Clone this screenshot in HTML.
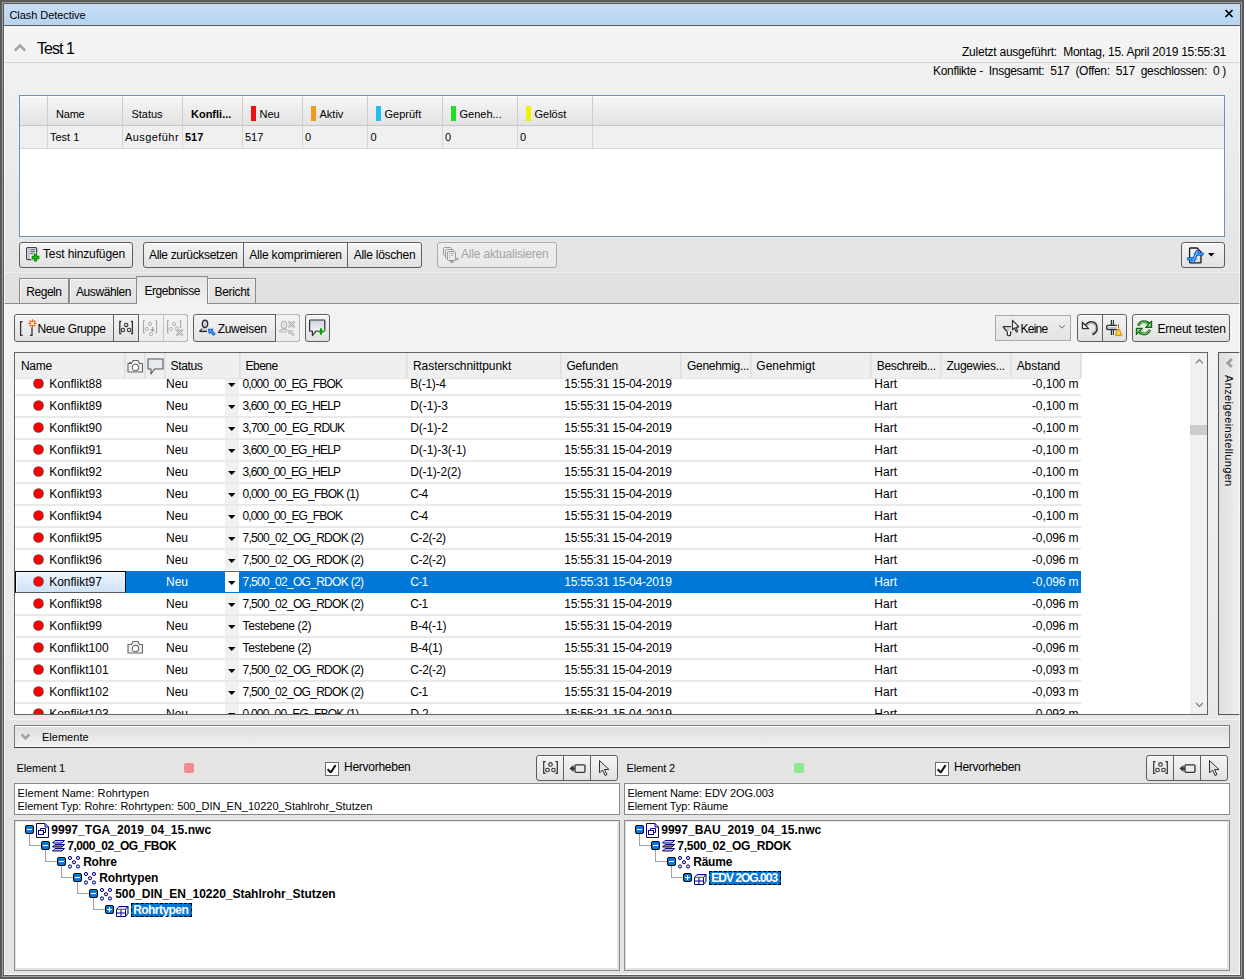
<!DOCTYPE html>
<html><head><meta charset="utf-8">
<style>
*{box-sizing:border-box;margin:0;padding:0}
html,body{width:1246px;height:980px;overflow:hidden;background:#fff;font-family:"Liberation Sans",sans-serif;font-size:12px;color:#000}
.a{position:absolute}
.t{position:absolute;white-space:nowrap;line-height:1}
svg{position:absolute;overflow:visible}
</style></head><body>
<div class="a" style="left:0px;top:0px;width:1244px;height:979px;background:#595959"></div>
<div class="a" style="left:2px;top:2px;width:1240px;height:975px;background:#9d9d9d"></div>
<div class="a" style="left:3px;top:3px;width:1238px;height:973px;background:#595959"></div>
<div class="a" style="left:4px;top:4px;width:1236px;height:21px;background:linear-gradient(#c8def4,#b6d3f0)"></div>
<div class="t" style="left:9.5px;top:10.19px;font-size:11px;letter-spacing:-0.070px">Clash Detective</div>
<svg style="left:1224px;top:9px;" width="10" height="9" viewBox="0 0 10 9"><path d="M1.5 1L8.5 8M8.5 1L1.5 8" stroke="#000" stroke-width="1.7"/></svg>
<div class="a" style="left:4px;top:26px;width:1236px;height:36px;background:#f3f3f3"></div>
<div class="a" style="left:4px;top:62px;width:1236px;height:1px;background:#d4d4d4"></div>
<svg style="left:13px;top:43px;" width="14" height="10" viewBox="0 0 14 10"><path d="M1.8 7.6L7 2.6L12.2 7.6" fill="none" stroke="#a3a3a3" stroke-width="2.7"/></svg>
<div class="t" style="left:37px;top:40.66px;font-size:16px;letter-spacing:-0.948px">Test 1</div>
<div class="t" style="left:962px;top:46.34px;font-size:12px;letter-spacing:-0.234px">Zuletzt ausgeführt:&nbsp; Montag, 15. April 2019 15:55:31</div>
<div class="a" style="left:4px;top:63px;width:1236px;height:209px;background:linear-gradient(#f1f1f1,#e4e4e4)"></div>
<div class="a" style="left:4px;top:272px;width:1236px;height:1px;background:#efefef"></div>
<div class="t" style="left:933px;top:64.84px;font-size:12px;letter-spacing:-0.321px">Konflikte -&nbsp; Insgesamt:&nbsp; 517&nbsp; (Offen:&nbsp; 517&nbsp; geschlossen:&nbsp; 0 )</div>
<div class="a" style="left:19px;top:95px;width:1206px;height:142px;background:#fff;border:1px solid #7092b8"></div>
<div class="a" style="left:20px;top:96px;width:1204px;height:29px;background:linear-gradient(#f6f6f6,#e3e3e3);border-top:1px solid #fff"></div>
<div class="a" style="left:20px;top:125px;width:1204px;height:1px;background:#c6c6c6"></div>
<div class="a" style="left:20px;top:126px;width:1204px;height:22px;background:#f0f0f0"></div>
<div class="a" style="left:20px;top:148px;width:1204px;height:1px;background:#d6d6d6"></div>
<div class="a" style="left:47px;top:96px;width:1px;height:29px;background:#cdcdcd"></div>
<div class="a" style="left:47px;top:126px;width:1px;height:22px;background:#d6d6d6"></div>
<div class="a" style="left:122px;top:96px;width:1px;height:29px;background:#cdcdcd"></div>
<div class="a" style="left:122px;top:126px;width:1px;height:22px;background:#d6d6d6"></div>
<div class="a" style="left:182px;top:96px;width:1px;height:29px;background:#cdcdcd"></div>
<div class="a" style="left:182px;top:126px;width:1px;height:22px;background:#d6d6d6"></div>
<div class="a" style="left:242px;top:96px;width:1px;height:29px;background:#cdcdcd"></div>
<div class="a" style="left:242px;top:126px;width:1px;height:22px;background:#d6d6d6"></div>
<div class="a" style="left:302px;top:96px;width:1px;height:29px;background:#cdcdcd"></div>
<div class="a" style="left:302px;top:126px;width:1px;height:22px;background:#d6d6d6"></div>
<div class="a" style="left:367px;top:96px;width:1px;height:29px;background:#cdcdcd"></div>
<div class="a" style="left:367px;top:126px;width:1px;height:22px;background:#d6d6d6"></div>
<div class="a" style="left:442px;top:96px;width:1px;height:29px;background:#cdcdcd"></div>
<div class="a" style="left:442px;top:126px;width:1px;height:22px;background:#d6d6d6"></div>
<div class="a" style="left:517px;top:96px;width:1px;height:29px;background:#cdcdcd"></div>
<div class="a" style="left:517px;top:126px;width:1px;height:22px;background:#d6d6d6"></div>
<div class="a" style="left:592px;top:96px;width:1px;height:29px;background:#cdcdcd"></div>
<div class="a" style="left:592px;top:126px;width:1px;height:22px;background:#d6d6d6"></div>
<div class="t" style="left:56px;top:109.19px;font-size:11px;letter-spacing:-0.211px">Name</div>
<div class="t" style="left:131.5px;top:109.19px;font-size:11px;letter-spacing:-0.031px">Status</div>
<div class="t" style="left:191px;top:109.19px;font-size:11px;font-weight:bold;letter-spacing:-0.003px">Konfli...</div>
<div class="a" style="left:251px;top:106px;width:5px;height:15px;background:#ee1111"></div>
<div class="t" style="left:259.5px;top:109.19px;font-size:11px;">Neu</div>
<div class="a" style="left:311px;top:106px;width:5px;height:15px;background:#f39a1e"></div>
<div class="t" style="left:319.5px;top:109.19px;font-size:11px;">Aktiv</div>
<div class="a" style="left:376px;top:106px;width:5px;height:15px;background:#1ec0ee"></div>
<div class="t" style="left:384.5px;top:109.19px;font-size:11px;">Geprüft</div>
<div class="a" style="left:451px;top:106px;width:5px;height:15px;background:#22dd22"></div>
<div class="t" style="left:459.5px;top:109.19px;font-size:11px;">Geneh...</div>
<div class="a" style="left:526px;top:106px;width:5px;height:15px;background:#f0f000"></div>
<div class="t" style="left:534.5px;top:109.19px;font-size:11px;">Gelöst</div>
<div class="t" style="left:50px;top:132.19px;font-size:11px;">Test 1</div>
<div class="t" style="left:125px;top:132.19px;font-size:11px;letter-spacing:0.427px">Ausgeführ</div>
<div class="t" style="left:185px;top:132.19px;font-size:11px;font-weight:bold;">517</div>
<div class="t" style="left:245px;top:132.19px;font-size:11px;">517</div>
<div class="t" style="left:305px;top:132.19px;font-size:11px;">0</div>
<div class="t" style="left:370.5px;top:132.19px;font-size:11px;">0</div>
<div class="t" style="left:445px;top:132.19px;font-size:11px;">0</div>
<div class="t" style="left:520px;top:132.19px;font-size:11px;">0</div>
<div class="a" style="left:19px;top:242px;width:114px;height:26px;background:linear-gradient(#f4f4f4 0%,#ececec 45%,#e1e1e1 100%);border:1px solid #5e5e5e;border-radius:3px;box-shadow:inset 0 1px 0 #fff"></div>
<svg style="left:26px;top:247px;" width="15" height="16" viewBox="0 0 15 16"><rect x="0.6" y="0.6" width="10" height="12" rx="1" fill="#fff" stroke="#3c4450" stroke-width="1.2"/><g fill="#555d68"><rect x="2.4" y="2.3" width="1.2" height="1.2"/><rect x="2.4" y="4.3" width="1.2" height="1.2"/><rect x="2.4" y="6.3" width="1.2" height="1.2"/><rect x="2.4" y="8.3" width="1.2" height="1.2"/><rect x="2.4" y="10.3" width="1.2" height="1.2"/><rect x="4.3" y="2.2" width="5" height="1.2"/><rect x="4.3" y="4.2" width="5" height="1.2"/><rect x="4.3" y="6.2" width="3" height="1.2"/></g><path d="M9.5 6V15M5 10.5H14" stroke="#fff" stroke-width="4.6"/><path d="M9.5 6.6V14.4M5.6 10.5H13.4" stroke="#0a7a0a" stroke-width="3.4"/><path d="M9.5 7.4V13.6M6.4 10.5H12.6" stroke="#12c412" stroke-width="1.6"/></svg>
<div class="t" style="left:43px;top:247.84px;font-size:12px;letter-spacing:-0.138px">Test hinzufügen</div>
<div class="a" style="left:143px;top:242px;width:279px;height:26px;background:linear-gradient(#f4f4f4 0%,#ececec 45%,#e1e1e1 100%);border:1px solid #5e5e5e;border-radius:3px;box-shadow:inset 0 1px 0 #fff"></div>
<div class="a" style="left:243px;top:243px;width:1px;height:24px;background:#5e5e5e"></div>
<div class="a" style="left:347px;top:243px;width:1px;height:24px;background:#5e5e5e"></div>
<div class="t" style="left:149px;top:248.84px;font-size:12px;letter-spacing:-0.338px">Alle zurücksetzen</div>
<div class="t" style="left:249.3px;top:248.84px;font-size:12px;letter-spacing:-0.208px">Alle komprimieren</div>
<div class="t" style="left:353.7px;top:248.84px;font-size:12px;letter-spacing:-0.252px">Alle löschen</div>
<div class="a" style="left:437px;top:242px;width:120px;height:26px;background:linear-gradient(#eeeeee,#e9e9e9);border:1px solid #ababab;border-radius:3px"></div>
<svg style="left:443px;top:247px;" width="16" height="17" viewBox="0 0 16 17"><g fill="none" stroke="#9c9c9c" stroke-width="1"><rect x="0.5" y="0.5" width="8" height="8" rx="1.2"/><rect x="2.5" y="2.5" width="8" height="9" rx="1.2" fill="#ececec"/><rect x="4.5" y="4.5" width="8" height="9" rx="1.2" fill="#ececec"/></g><g fill="#a8a8a8"><rect x="6" y="6" width="1" height="1"/><rect x="6" y="8" width="1" height="1"/><rect x="6" y="10" width="1" height="1"/><rect x="8" y="6" width="3" height="1"/><rect x="8" y="8" width="2" height="1"/></g><path d="M8.2 15.2L14.5 11.8M12.5 11.2H14.8V13.5M7.8 12.8V15.4H10.2" fill="none" stroke="#a0a0a0" stroke-width="1.1"/></svg>
<div class="t" style="left:461px;top:248.34px;font-size:12px;color:#a3a3a3;letter-spacing:-0.173px">Alle aktualisieren</div>
<div class="a" style="left:1181px;top:242px;width:44px;height:26px;background:linear-gradient(#f4f4f4 0%,#ececec 45%,#e1e1e1 100%);border:1px solid #5e5e5e;border-radius:3px;box-shadow:inset 0 1px 0 #fff"></div>
<svg style="left:1187px;top:247px;" width="17" height="17" viewBox="0 0 17 17"><defs><linearGradient id="dg" x1="0" y1="0" x2="1" y2="1"><stop offset="0" stop-color="#fff"/><stop offset="1" stop-color="#cfd5de"/></linearGradient></defs><path d="M2.6 1.6Q2.6 1 3.2 1H10L14 5V15.2Q14 15.8 13.4 15.8H3.2Q2.6 15.8 2.6 15.2Z" fill="url(#dg)" stroke="#1a1a1a" stroke-width="1.3"/><path d="M8.5 7H15.2M1.5 11.8H8M10.2 4.5L5.8 15" stroke="#0f5fc8" stroke-width="3.4" stroke-linecap="round"/><path d="M8.5 7H15.2M1.5 11.8H8M10.2 4.5L5.8 15" stroke="#3c9cff" stroke-width="1.6" stroke-linecap="round"/><path d="M10.2 4.5L5.8 15" stroke="#fff" stroke-width="0.6" stroke-dasharray="1 1"/></svg>
<svg style="left:1208px;top:253px;" width="7" height="4" viewBox="0 0 7 4"><path d="M0 0H6.5L3.25 3.5Z" fill="#000"/></svg>
<div class="a" style="left:4px;top:273px;width:1236px;height:30px;background:#e1e1e1"></div>
<div class="a" style="left:4px;top:303px;width:1236px;height:1px;background:#8c8c8c"></div>
<div class="a" style="left:4px;top:304px;width:1236px;height:416px;background:linear-gradient(#f3f3f3,#e8e8e8)"></div>
<div class="a" style="left:19px;top:278px;width:50px;height:25px;background:linear-gradient(#e9e9e9,#e1e1e1);border:1px solid #8a8a8a;border-bottom:none;box-shadow:inset 1px 1px 0 #f6f6f6"></div>
<div class="a" style="left:69px;top:278px;width:68px;height:25px;background:linear-gradient(#e9e9e9,#e1e1e1);border:1px solid #8a8a8a;border-bottom:none;box-shadow:inset 1px 1px 0 #f6f6f6"></div>
<div class="a" style="left:207px;top:278px;width:49px;height:25px;background:linear-gradient(#e9e9e9,#e1e1e1);border:1px solid #8a8a8a;border-bottom:none;box-shadow:inset 1px 1px 0 #f6f6f6"></div>
<div class="a" style="left:136px;top:276px;width:72px;height:28px;background:linear-gradient(#e4e4e4,#f2f2f2);border:1px solid #8a8a8a;border-bottom:none"></div>
<div class="t" style="left:26.3px;top:285.84px;font-size:12px;letter-spacing:-0.472px">Regeln</div>
<div class="t" style="left:76px;top:285.84px;font-size:12px;letter-spacing:-0.413px">Auswählen</div>
<div class="t" style="left:144.5px;top:285.34px;font-size:12px;letter-spacing:-0.465px">Ergebnisse</div>
<div class="t" style="left:214.5px;top:285.84px;font-size:12px;letter-spacing:-0.337px">Bericht</div>
<div class="a" style="left:14px;top:314px;width:174px;height:28px;background:linear-gradient(#f4f4f4 0%,#ececec 45%,#e1e1e1 100%);border:1px solid #5e5e5e;border-radius:3px;box-shadow:inset 0 1px 0 #fff"></div>
<div class="a" style="left:113px;top:315px;width:1px;height:26px;background:#5e5e5e"></div>
<div class="a" style="left:139px;top:314px;width:49px;height:28px;background:linear-gradient(#f3f3f3,#ececec);border:1px solid #b9b9b9;border-left:none;border-radius:0 3px 3px 0"></div>
<div class="a" style="left:163px;top:315px;width:1px;height:26px;background:#c5c5c5"></div>
<div class="a" style="left:138px;top:314px;width:1px;height:28px;background:#5e5e5e"></div>
<svg style="left:16px;top:316px;" width="24" height="24" viewBox="0 0 24 24"><path d="M6.6 5.6H4.6V19.4H6.6M16 11.2V19.4H14" fill="none" stroke="#2f3338" stroke-width="1.3"/><g stroke="#e8400e" stroke-width="1.3" stroke-linecap="round"><path d="M16.4 3.9V10.9M12.9 7.4H19.9M13.9 4.9L18.9 9.9M18.9 4.9L13.9 9.9"/></g><circle cx="16.4" cy="7.4" r="1.9" fill="#ffe45c"/><circle cx="16.4" cy="7.4" r="0.9" fill="#fffbe0"/></svg>
<div class="t" style="left:37.5px;top:323.34px;font-size:12px;letter-spacing:-0.368px">Neue Gruppe</div>
<svg style="left:114px;top:316px;" width="24" height="24" viewBox="0 0 24 24"><path d="M7.3 5.5H5.8V17.5H7.3M16.9 5.5H18.4V17.5H16.9" fill="none" stroke="#2f3338" stroke-width="1.3"/><circle cx="12.2" cy="8.9" r="1.7" fill="none" stroke="#2f3338" stroke-width="1.1"/><circle cx="8.9" cy="14" r="1.7" fill="none" stroke="#2f3338" stroke-width="1.1"/><circle cx="15.1" cy="14" r="1.7" fill="none" stroke="#2f3338" stroke-width="1.1"/></svg>
<svg style="left:138px;top:316px;" width="24" height="24" viewBox="0 0 24 24"><path d="M6.8 4.7H5.5V16.8H6.8M17.3 4.7H18.6V16.8H17.3" fill="none" stroke="#a9a9a9" stroke-width="1.1"/><circle cx="12" cy="7.9" r="1.6" fill="none" stroke="#b0b0b0"/><circle cx="8.8" cy="13" r="1.6" fill="none" stroke="#b0b0b0"/><circle cx="13" cy="18" r="1.6" fill="none" stroke="#b0b0b0"/><path d="M14.6 11V15M12.8 13.4L14.6 15.2L16.4 13.4" fill="none" stroke="#a0a0a0" stroke-width="1.1"/></svg>
<svg style="left:163px;top:316px;" width="24" height="24" viewBox="0 0 24 24"><path d="M5.9 4.7H4.6V16.8H5.9M16.3 4.7H17.6V12" fill="none" stroke="#a9a9a9" stroke-width="1.1"/><circle cx="11" cy="8" r="1.6" fill="none" stroke="#b8b8b8"/><circle cx="7.8" cy="13" r="1.6" fill="none" stroke="#b8b8b8"/><circle cx="14" cy="12.5" r="1.6" fill="none" stroke="#b8b8b8"/><path d="M13.6 13.5L19.6 19.5M19.6 13.5L13.6 19.5" stroke="#a8a8a8" stroke-width="2.4"/><path d="M13.6 13.5L19.6 19.5M19.6 13.5L13.6 19.5" stroke="#eeeeee" stroke-width="0.8"/></svg>
<div class="a" style="left:193px;top:314px;width:107px;height:28px;background:linear-gradient(#f4f4f4 0%,#ececec 45%,#e1e1e1 100%);border:1px solid #5e5e5e;border-radius:3px;box-shadow:inset 0 1px 0 #fff"></div>
<div class="a" style="left:276px;top:314px;width:24px;height:28px;background:linear-gradient(#f3f3f3,#ececec);border:1px solid #b9b9b9;border-left:none;border-radius:0 3px 3px 0"></div>
<svg style="left:194px;top:316px;" width="24" height="24" viewBox="0 0 24 24"><path d="M5.6 15.3L8.2 12.6Q8.8 12.2 9.6 12.2H13.2V15.3Z" fill="#d2d6dd" stroke="none"/><path d="M5.6 15.2L8.2 12.6" stroke="#2a2d33" stroke-width="1.1"/><path d="M5.4 15.4H13" stroke="#1f2227" stroke-width="1.3"/><ellipse cx="11" cy="7.8" rx="2.7" ry="3.6" fill="#cfd3da" stroke="#2a2d33" stroke-width="1.4"/><path d="M9.6 11.6H12.4" stroke="#2a2d33" stroke-width="1.2"/><path d="M14.6 13.4H18.9L17.8 14.6L21 17.8L19.6 19.2L16.4 16L15.2 17.2Z" fill="#7ab8ff" stroke="#0a6ad6" stroke-width="1.2" stroke-linejoin="round"/></svg>
<div class="t" style="left:217.7px;top:322.54px;font-size:12px;letter-spacing:-0.295px">Zuweisen</div>
<div class="a" style="left:275px;top:314px;width:1px;height:28px;background:#5e5e5e"></div>
<svg style="left:276px;top:314px;" width="24" height="28" viewBox="0 0 24 28"><path d="M3.6 18H10.8V15.4H6.4Q4.2 15.4 3.6 17Z" fill="#e6e6e6" stroke="#b4b4b4" stroke-width="1"/><ellipse cx="8" cy="11" rx="2.7" ry="3.7" fill="#e2e2e2" stroke="#b4b4b4" stroke-width="1.1"/><path d="M12.6 7.4L18.6 13.4M18.6 7.4L12.6 13.4" stroke="#b0b0b0" stroke-width="2.4"/><path d="M12.6 7.4L18.6 13.4M18.6 7.4L12.6 13.4" stroke="#f0f0f0" stroke-width="0.7"/><path d="M12.6 16.8H16.4L15.4 17.8L18.2 20.6L17 21.8L14.2 19L13.2 20Z" fill="#e4e4e4" stroke="#b0b0b0" stroke-width="1"/></svg>
<div class="a" style="left:305px;top:314px;width:25px;height:28px;background:linear-gradient(#f4f4f4 0%,#ececec 45%,#e1e1e1 100%);border:1px solid #5e5e5e;border-radius:3px;box-shadow:inset 0 1px 0 #fff"></div>
<svg style="left:305px;top:314px;" width="25" height="28" viewBox="0 0 25 28"><defs><linearGradient id="bg1" x1="0" y1="0" x2="0" y2="1"><stop offset="0" stop-color="#cdd3dc"/><stop offset="1" stop-color="#ffffff"/></linearGradient></defs><path d="M4.6 6.8Q4.6 6 5.4 6H19Q19.8 6 19.8 6.8V16.4Q19.8 17.2 19 17.2H11L7.4 21.6V17.2H5.4Q4.6 17.2 4.6 16.4Z" fill="url(#bg1)" stroke="#2f3338" stroke-width="1.2" stroke-linejoin="round"/><path d="M16 14V21M12.6 17.5H19.4" stroke="#fff" stroke-width="3.6"/><path d="M16 14.2V20.8M12.8 17.5H19.2" stroke="#08a008" stroke-width="2.2"/></svg>
<div class="a" style="left:995px;top:315px;width:76px;height:26px;background:linear-gradient(#eeeeee,#e3e3e3);border:1px solid #a9a9a9"></div>
<svg style="left:1000px;top:316px;" width="24" height="24" viewBox="0 0 24 24"><path d="M3.8 12.2H10.8L8 15.4H7Z" fill="#c3c9d2"/><path d="M11 10.6H3.6Q3 10.6 3.4 11.4L6.8 15.2" fill="none" stroke="#2e3136" stroke-width="1.3" stroke-linejoin="round"/><path d="M7.4 15.6V18.6Q7.4 19.6 8.4 19.6H9.6Q10.6 19.6 10.6 18.6V15.6" fill="#fff" stroke="#2e3136" stroke-width="1.3"/><path d="M11.8 15.4L12 15.2" stroke="#2e3136" stroke-width="1.3"/><path d="M12.5 4.3V13.7L14.6 11.9L16.1 15.4Q16.5 16.2 17.2 15.8Q17.8 15.4 17.4 14.6L16 11.3L18.8 10.8Z" fill="#fff" stroke="#2e3136" stroke-width="1.2" stroke-linejoin="round"/></svg>
<div class="t" style="left:1020.5px;top:323.34px;font-size:12px;letter-spacing:-0.741px">Keine</div>
<svg style="left:1059px;top:325px;" width="6" height="4" viewBox="0 0 6 4"><path d="M0.3 0.3L3 3.2L5.7 0.3" fill="none" stroke="#666" stroke-width="1"/></svg>
<div class="a" style="left:1077px;top:314px;width:50px;height:28px;background:linear-gradient(#f4f4f4 0%,#ececec 45%,#e1e1e1 100%);border:1px solid #5e5e5e;border-radius:3px;box-shadow:inset 0 1px 0 #fff"></div>
<div class="a" style="left:1102px;top:315px;width:1px;height:26px;background:#5e5e5e"></div>
<svg style="left:1078px;top:316px;" width="24" height="24" viewBox="0 0 24 24"><path d="M7.2 10.6Q9.6 6.2 13.2 6.2Q18.6 6.2 18.6 12.4Q18.6 15.6 15.4 17.8" fill="none" stroke="#2e3238" stroke-width="2.6" stroke-linecap="round"/><path d="M7.4 10.6Q9.6 6.9 13.2 6.9Q17.9 6.9 17.9 12.4Q17.9 15.2 15.4 17.2" fill="none" stroke="#f4f4f4" stroke-width="0.9" stroke-linecap="round"/><path d="M4.4 6.3V12.6H10.6Z" fill="#f4f4f4" stroke="#2e3238" stroke-width="1.3" stroke-linejoin="round"/></svg>
<svg style="left:1103px;top:316px;" width="24" height="24" viewBox="0 0 24 24"><path d="M8.4 4V9M10.4 4V9M8.4 13.8V19M10.4 13.8V19" stroke="#2e3238" stroke-width="1.2"/><path d="M13.8 9.3H5Q3.6 9.3 3.6 11.4Q3.6 13.5 5 13.5H13.8" fill="#f2f2f2" stroke="#2e3238" stroke-width="1.3"/><path d="M5 11.4H13.6" stroke="#2e3238" stroke-width="0.6" opacity="0.5"/><path d="M15.5 8V12.5" stroke="#c77800" stroke-width="1"/><path d="M14.3 13.5H16.7L17.2 15.5L18.6 19.6H12.4L13.8 15.5Z" fill="#f6cf1a" stroke="#d08200" stroke-width="0.9" stroke-linejoin="round"/><path d="M14.6 16.5H16.4" stroke="#fff6b0" stroke-width="1"/></svg>
<div class="a" style="left:1132px;top:314px;width:98px;height:28px;background:linear-gradient(#f4f4f4 0%,#ececec 45%,#e1e1e1 100%);border:1px solid #5e5e5e;border-radius:3px;box-shadow:inset 0 1px 0 #fff"></div>
<svg style="left:1132px;top:316px;" width="24" height="24" viewBox="0 0 24 24"><g stroke="#0b6e0b" stroke-linejoin="round"><path d="M6.2 9.8Q8 5.6 12 5.6Q15.2 5.6 17 8.3" fill="none" stroke-width="2.8"/><path d="M19.6 5.2V11.4H13.6Z" fill="#8ec47e" stroke-width="1.2"/><path d="M17.8 13.8Q16 18 12 18Q8.8 18 7 15.3" fill="none" stroke-width="2.8"/><path d="M4.4 18.4V12.4H10.4Z" fill="#8ec47e" stroke-width="1.2"/></g><g stroke="#9ccf8c" fill="none" stroke-width="1"><path d="M6.4 9.6Q8.2 5.8 12 5.8Q15 5.8 16.6 8.4"/><path d="M17.6 14Q15.8 17.8 12 17.8Q9 17.8 7.4 15.2"/></g></svg>
<div class="t" style="left:1157.6px;top:322.54px;font-size:12px;letter-spacing:-0.261px">Erneut testen</div>
<div class="a" style="left:14px;top:352px;width:1194px;height:363px;background:#fff;border:1px solid #646464"></div>
<div class="a" style="left:15px;top:353px;width:1066px;height:25px;background:#efefef"></div>
<div class="a" style="left:15px;top:378px;width:1066px;height:1px;background:#e3e3e3"></div>
<div class="a" style="left:124px;top:353px;width:2px;height:25px;background:linear-gradient(90deg,#dcdcdc,#e8e8e8)"></div>
<div class="a" style="left:144px;top:353px;width:2px;height:25px;background:linear-gradient(90deg,#dcdcdc,#e8e8e8)"></div>
<div class="a" style="left:164px;top:353px;width:2px;height:25px;background:linear-gradient(90deg,#dcdcdc,#e8e8e8)"></div>
<div class="a" style="left:239px;top:353px;width:2px;height:25px;background:linear-gradient(90deg,#dcdcdc,#e8e8e8)"></div>
<div class="a" style="left:406px;top:353px;width:2px;height:25px;background:linear-gradient(90deg,#dcdcdc,#e8e8e8)"></div>
<div class="a" style="left:560px;top:353px;width:2px;height:25px;background:linear-gradient(90deg,#dcdcdc,#e8e8e8)"></div>
<div class="a" style="left:680px;top:353px;width:2px;height:25px;background:linear-gradient(90deg,#dcdcdc,#e8e8e8)"></div>
<div class="a" style="left:750px;top:353px;width:2px;height:25px;background:linear-gradient(90deg,#dcdcdc,#e8e8e8)"></div>
<div class="a" style="left:870px;top:353px;width:2px;height:25px;background:linear-gradient(90deg,#dcdcdc,#e8e8e8)"></div>
<div class="a" style="left:940px;top:353px;width:2px;height:25px;background:linear-gradient(90deg,#dcdcdc,#e8e8e8)"></div>
<div class="a" style="left:1010px;top:353px;width:2px;height:25px;background:linear-gradient(90deg,#dcdcdc,#e8e8e8)"></div>
<div class="a" style="left:1080px;top:353px;width:2px;height:25px;background:linear-gradient(90deg,#dcdcdc,#e8e8e8)"></div>
<div class="t" style="left:20.9px;top:359.54px;font-size:12px;letter-spacing:-0.254px">Name</div>
<svg style="left:127px;top:359px;" width="17" height="14" viewBox="0 0 17 14"><path d="M1 4.5H4.5L6 1.5H11L12.5 4.5H15.5V13H1Z" fill="#eceef0" stroke="#666" stroke-width="1.1" stroke-linejoin="round"/><circle cx="8.5" cy="8.5" r="3.2" fill="#fff" stroke="#666" stroke-width="1.1"/><path d="M2.5 4.5V3.5H4" stroke="#666"/></svg>
<svg style="left:147px;top:358px;" width="17" height="17" viewBox="0 0 17 17"><path d="M1 1H16V11H7.5L4 16V11H1Z" fill="#e6e9ee" stroke="#555" stroke-width="1.1" stroke-linejoin="round"/></svg>
<div class="t" style="left:170.6px;top:359.54px;font-size:12px;letter-spacing:-0.372px">Status</div>
<div class="t" style="left:245.6px;top:359.54px;font-size:12px;letter-spacing:-0.541px">Ebene</div>
<div class="t" style="left:413px;top:359.54px;font-size:12px;letter-spacing:-0.061px">Rasterschnittpunkt</div>
<div class="t" style="left:566.4px;top:359.54px;font-size:12px;letter-spacing:-0.140px">Gefunden</div>
<div class="t" style="left:687px;top:359.54px;font-size:12px;letter-spacing:-0.307px">Genehmig...</div>
<div class="t" style="left:756.3px;top:359.54px;font-size:12px;letter-spacing:-0.000px">Genehmigt</div>
<div class="t" style="left:876.8px;top:359.54px;font-size:12px;letter-spacing:-0.365px">Beschreib...</div>
<div class="t" style="left:946.5px;top:359.54px;font-size:12px;letter-spacing:-0.269px">Zugewies...</div>
<div class="t" style="left:1016.7px;top:359.54px;font-size:12px;letter-spacing:-0.078px">Abstand</div>
<div class="a" style="left:1190px;top:353px;width:17px;height:361px;background:#f0f0f0"></div>
<svg style="left:1195px;top:359px;" width="9" height="6" viewBox="0 0 9 6"><path d="M1 4.3L4.4 0.8L7.8 4.3" fill="none" stroke="#8c8c8c" stroke-width="1.5"/></svg>
<div class="a" style="left:1190px;top:425px;width:17px;height:10px;background:#cdcdcd"></div>
<svg style="left:1195px;top:702px;" width="9" height="6" viewBox="0 0 9 6"><path d="M1 1L4.4 4.5L7.8 1" fill="none" stroke="#8c8c8c" stroke-width="1.5"/></svg>
<div class="a" style="left:15px;top:379px;width:1175px;height:335px;overflow:hidden">
<div class="a" style="left:0px;top:15px;width:1066px;height:2px;background:#e9e9e9"></div>
<div class="a" style="left:18.9px;top:0.1px;width:9.2px;height:9.2px;border-radius:50%;background:#f00;box-shadow:0 0 0 0.8px #6a4040"></div>
<div class="a" style="left:210px;top:0px;width:14px;height:15px;background:#f0f0f0"></div>
<svg style="left:213px;top:3.5px;" width="8" height="4" viewBox="0 0 8 4"><path d="M0 0H7.5L3.75 4Z" fill="#000"/></svg>
<div class="t" style="left:34.2px;top:-0.66px;font-size:12px;color:#000;">Konflikt88</div>
<div class="t" style="left:151px;top:-0.66px;font-size:12px;color:#000;">Neu</div>
<div class="t" style="left:227.5px;top:-0.66px;font-size:12px;color:#000;letter-spacing:-0.864px">0,000_00_EG_FBOK</div>
<div class="t" style="left:395.2px;top:-0.66px;font-size:12px;color:#000;letter-spacing:-0.263px">B(-1)-4</div>
<div class="t" style="left:549.2px;top:-0.66px;font-size:12px;color:#000;letter-spacing:-0.207px">15:55:31 15-04-2019</div>
<div class="t" style="left:859.3px;top:-0.66px;font-size:12px;color:#000;">Hart</div>
<div class="t" style="left:1003.5px;width:60px;text-align:right;top:-0.66px;font-size:12px;letter-spacing:-0.1px;color:#000">-0,100 m</div>
<div class="a" style="left:0px;top:37px;width:1066px;height:2px;background:#e9e9e9"></div>
<div class="a" style="left:18.9px;top:22.1px;width:9.2px;height:9.2px;border-radius:50%;background:#f00;box-shadow:0 0 0 0.8px #6a4040"></div>
<div class="a" style="left:210px;top:17px;width:14px;height:20px;background:#f0f0f0"></div>
<svg style="left:213px;top:25.5px;" width="8" height="4" viewBox="0 0 8 4"><path d="M0 0H7.5L3.75 4Z" fill="#000"/></svg>
<div class="t" style="left:34.2px;top:21.34px;font-size:12px;color:#000;">Konflikt89</div>
<div class="t" style="left:151px;top:21.34px;font-size:12px;color:#000;">Neu</div>
<div class="t" style="left:227.5px;top:21.34px;font-size:12px;color:#000;letter-spacing:-0.912px">3,600_00_EG_HELP</div>
<div class="t" style="left:395.2px;top:21.34px;font-size:12px;color:#000;letter-spacing:-0.029px">D(-1)-3</div>
<div class="t" style="left:549.2px;top:21.34px;font-size:12px;color:#000;letter-spacing:-0.207px">15:55:31 15-04-2019</div>
<div class="t" style="left:859.3px;top:21.34px;font-size:12px;color:#000;">Hart</div>
<div class="t" style="left:1003.5px;width:60px;text-align:right;top:21.34px;font-size:12px;letter-spacing:-0.1px;color:#000">-0,100 m</div>
<div class="a" style="left:0px;top:59px;width:1066px;height:2px;background:#e9e9e9"></div>
<div class="a" style="left:18.9px;top:44.1px;width:9.2px;height:9.2px;border-radius:50%;background:#f00;box-shadow:0 0 0 0.8px #6a4040"></div>
<div class="a" style="left:210px;top:39px;width:14px;height:20px;background:#f0f0f0"></div>
<svg style="left:213px;top:47.5px;" width="8" height="4" viewBox="0 0 8 4"><path d="M0 0H7.5L3.75 4Z" fill="#000"/></svg>
<div class="t" style="left:34.2px;top:43.34px;font-size:12px;color:#000;">Konflikt90</div>
<div class="t" style="left:151px;top:43.34px;font-size:12px;color:#000;">Neu</div>
<div class="t" style="left:227.5px;top:43.34px;font-size:12px;color:#000;letter-spacing:-0.809px">3,700_00_EG_RDUK</div>
<div class="t" style="left:395.2px;top:43.34px;font-size:12px;color:#000;letter-spacing:-0.029px">D(-1)-2</div>
<div class="t" style="left:549.2px;top:43.34px;font-size:12px;color:#000;letter-spacing:-0.207px">15:55:31 15-04-2019</div>
<div class="t" style="left:859.3px;top:43.34px;font-size:12px;color:#000;">Hart</div>
<div class="t" style="left:1003.5px;width:60px;text-align:right;top:43.34px;font-size:12px;letter-spacing:-0.1px;color:#000">-0,100 m</div>
<div class="a" style="left:0px;top:81px;width:1066px;height:2px;background:#e9e9e9"></div>
<div class="a" style="left:18.9px;top:66.1px;width:9.2px;height:9.2px;border-radius:50%;background:#f00;box-shadow:0 0 0 0.8px #6a4040"></div>
<div class="a" style="left:210px;top:61px;width:14px;height:20px;background:#f0f0f0"></div>
<svg style="left:213px;top:69.5px;" width="8" height="4" viewBox="0 0 8 4"><path d="M0 0H7.5L3.75 4Z" fill="#000"/></svg>
<div class="t" style="left:34.2px;top:65.34px;font-size:12px;color:#000;">Konflikt91</div>
<div class="t" style="left:151px;top:65.34px;font-size:12px;color:#000;">Neu</div>
<div class="t" style="left:227.5px;top:65.34px;font-size:12px;color:#000;letter-spacing:-0.912px">3,600_00_EG_HELP</div>
<div class="t" style="left:395.2px;top:65.34px;font-size:12px;color:#000;letter-spacing:-0.061px">D(-1)-3(-1)</div>
<div class="t" style="left:549.2px;top:65.34px;font-size:12px;color:#000;letter-spacing:-0.207px">15:55:31 15-04-2019</div>
<div class="t" style="left:859.3px;top:65.34px;font-size:12px;color:#000;">Hart</div>
<div class="t" style="left:1003.5px;width:60px;text-align:right;top:65.34px;font-size:12px;letter-spacing:-0.1px;color:#000">-0,100 m</div>
<div class="a" style="left:0px;top:103px;width:1066px;height:2px;background:#e9e9e9"></div>
<div class="a" style="left:18.9px;top:88.1px;width:9.2px;height:9.2px;border-radius:50%;background:#f00;box-shadow:0 0 0 0.8px #6a4040"></div>
<div class="a" style="left:210px;top:83px;width:14px;height:20px;background:#f0f0f0"></div>
<svg style="left:213px;top:91.5px;" width="8" height="4" viewBox="0 0 8 4"><path d="M0 0H7.5L3.75 4Z" fill="#000"/></svg>
<div class="t" style="left:34.2px;top:87.34px;font-size:12px;color:#000;">Konflikt92</div>
<div class="t" style="left:151px;top:87.34px;font-size:12px;color:#000;">Neu</div>
<div class="t" style="left:227.5px;top:87.34px;font-size:12px;color:#000;letter-spacing:-0.912px">3,600_00_EG_HELP</div>
<div class="t" style="left:395.2px;top:87.34px;font-size:12px;color:#000;letter-spacing:-0.187px">D(-1)-2(2)</div>
<div class="t" style="left:549.2px;top:87.34px;font-size:12px;color:#000;letter-spacing:-0.207px">15:55:31 15-04-2019</div>
<div class="t" style="left:859.3px;top:87.34px;font-size:12px;color:#000;">Hart</div>
<div class="t" style="left:1003.5px;width:60px;text-align:right;top:87.34px;font-size:12px;letter-spacing:-0.1px;color:#000">-0,100 m</div>
<div class="a" style="left:0px;top:125px;width:1066px;height:2px;background:#e9e9e9"></div>
<div class="a" style="left:18.9px;top:110.1px;width:9.2px;height:9.2px;border-radius:50%;background:#f00;box-shadow:0 0 0 0.8px #6a4040"></div>
<div class="a" style="left:210px;top:105px;width:14px;height:20px;background:#f0f0f0"></div>
<svg style="left:213px;top:113.5px;" width="8" height="4" viewBox="0 0 8 4"><path d="M0 0H7.5L3.75 4Z" fill="#000"/></svg>
<div class="t" style="left:34.2px;top:109.34px;font-size:12px;color:#000;">Konflikt93</div>
<div class="t" style="left:151px;top:109.34px;font-size:12px;color:#000;">Neu</div>
<div class="t" style="left:227.5px;top:109.34px;font-size:12px;color:#000;letter-spacing:-0.771px">0,000_00_EG_FBOK (1)</div>
<div class="t" style="left:395.2px;top:109.34px;font-size:12px;color:#000;letter-spacing:-0.648px">C-4</div>
<div class="t" style="left:549.2px;top:109.34px;font-size:12px;color:#000;letter-spacing:-0.207px">15:55:31 15-04-2019</div>
<div class="t" style="left:859.3px;top:109.34px;font-size:12px;color:#000;">Hart</div>
<div class="t" style="left:1003.5px;width:60px;text-align:right;top:109.34px;font-size:12px;letter-spacing:-0.1px;color:#000">-0,100 m</div>
<div class="a" style="left:0px;top:147px;width:1066px;height:2px;background:#e9e9e9"></div>
<div class="a" style="left:18.9px;top:132.1px;width:9.2px;height:9.2px;border-radius:50%;background:#f00;box-shadow:0 0 0 0.8px #6a4040"></div>
<div class="a" style="left:210px;top:127px;width:14px;height:20px;background:#f0f0f0"></div>
<svg style="left:213px;top:135.5px;" width="8" height="4" viewBox="0 0 8 4"><path d="M0 0H7.5L3.75 4Z" fill="#000"/></svg>
<div class="t" style="left:34.2px;top:131.34px;font-size:12px;color:#000;">Konflikt94</div>
<div class="t" style="left:151px;top:131.34px;font-size:12px;color:#000;">Neu</div>
<div class="t" style="left:227.5px;top:131.34px;font-size:12px;color:#000;letter-spacing:-0.864px">0,000_00_EG_FBOK</div>
<div class="t" style="left:395.2px;top:131.34px;font-size:12px;color:#000;letter-spacing:-0.648px">C-4</div>
<div class="t" style="left:549.2px;top:131.34px;font-size:12px;color:#000;letter-spacing:-0.207px">15:55:31 15-04-2019</div>
<div class="t" style="left:859.3px;top:131.34px;font-size:12px;color:#000;">Hart</div>
<div class="t" style="left:1003.5px;width:60px;text-align:right;top:131.34px;font-size:12px;letter-spacing:-0.1px;color:#000">-0,100 m</div>
<div class="a" style="left:0px;top:169px;width:1066px;height:2px;background:#e9e9e9"></div>
<div class="a" style="left:18.9px;top:154.1px;width:9.2px;height:9.2px;border-radius:50%;background:#f00;box-shadow:0 0 0 0.8px #6a4040"></div>
<div class="a" style="left:210px;top:149px;width:14px;height:20px;background:#f0f0f0"></div>
<svg style="left:213px;top:157.5px;" width="8" height="4" viewBox="0 0 8 4"><path d="M0 0H7.5L3.75 4Z" fill="#000"/></svg>
<div class="t" style="left:34.2px;top:153.34px;font-size:12px;color:#000;">Konflikt95</div>
<div class="t" style="left:151px;top:153.34px;font-size:12px;color:#000;">Neu</div>
<div class="t" style="left:227.5px;top:153.34px;font-size:12px;color:#000;letter-spacing:-0.702px">7,500_02_OG_RDOK (2)</div>
<div class="t" style="left:395.2px;top:153.34px;font-size:12px;color:#000;letter-spacing:-0.357px">C-2(-2)</div>
<div class="t" style="left:549.2px;top:153.34px;font-size:12px;color:#000;letter-spacing:-0.207px">15:55:31 15-04-2019</div>
<div class="t" style="left:859.3px;top:153.34px;font-size:12px;color:#000;">Hart</div>
<div class="t" style="left:1003.5px;width:60px;text-align:right;top:153.34px;font-size:12px;letter-spacing:-0.1px;color:#000">-0,096 m</div>
<div class="a" style="left:18.9px;top:176.1px;width:9.2px;height:9.2px;border-radius:50%;background:#f00;box-shadow:0 0 0 0.8px #6a4040"></div>
<div class="a" style="left:210px;top:171px;width:14px;height:20px;background:#f0f0f0"></div>
<svg style="left:213px;top:179.5px;" width="8" height="4" viewBox="0 0 8 4"><path d="M0 0H7.5L3.75 4Z" fill="#000"/></svg>
<div class="t" style="left:34.2px;top:175.34px;font-size:12px;color:#000;">Konflikt96</div>
<div class="t" style="left:151px;top:175.34px;font-size:12px;color:#000;">Neu</div>
<div class="t" style="left:227.5px;top:175.34px;font-size:12px;color:#000;letter-spacing:-0.702px">7,500_02_OG_RDOK (2)</div>
<div class="t" style="left:395.2px;top:175.34px;font-size:12px;color:#000;letter-spacing:-0.357px">C-2(-2)</div>
<div class="t" style="left:549.2px;top:175.34px;font-size:12px;color:#000;letter-spacing:-0.207px">15:55:31 15-04-2019</div>
<div class="t" style="left:859.3px;top:175.34px;font-size:12px;color:#000;">Hart</div>
<div class="t" style="left:1003.5px;width:60px;text-align:right;top:175.34px;font-size:12px;letter-spacing:-0.1px;color:#000">-0,096 m</div>
<div class="a" style="left:0px;top:192px;width:1066px;height:22px;background:#0078d7"></div>
<div class="a" style="left:0px;top:192px;width:111px;height:22px;background:linear-gradient(#ecf4fd,#cfe2f9);border:1px solid #000;border-bottom-color:#555b60;box-shadow:inset 1px 1px 0 #f6fbff"></div>
<div class="a" style="left:18.9px;top:198.1px;width:9.2px;height:9.2px;border-radius:50%;background:#f00;box-shadow:0 0 0 0.8px #6a4040"></div>
<div class="a" style="left:210px;top:193px;width:14px;height:20px;background:#fff"></div>
<svg style="left:213px;top:201.5px;" width="8" height="4" viewBox="0 0 8 4"><path d="M0 0H7.5L3.75 4Z" fill="#000"/></svg>
<div class="t" style="left:34.2px;top:197.34px;font-size:12px;color:#000;">Konflikt97</div>
<div class="t" style="left:151px;top:197.34px;font-size:12px;color:#fff;">Neu</div>
<div class="t" style="left:227.5px;top:197.34px;font-size:12px;color:#fff;letter-spacing:-0.702px">7,500_02_OG_RDOK (2)</div>
<div class="t" style="left:395.2px;top:197.34px;font-size:12px;color:#fff;letter-spacing:-0.648px">C-1</div>
<div class="t" style="left:549.2px;top:197.34px;font-size:12px;color:#fff;letter-spacing:-0.207px">15:55:31 15-04-2019</div>
<div class="t" style="left:859.3px;top:197.34px;font-size:12px;color:#fff;">Hart</div>
<div class="t" style="left:1003.5px;width:60px;text-align:right;top:197.34px;font-size:12px;letter-spacing:-0.1px;color:#fff">-0,096 m</div>
<div class="a" style="left:0px;top:235px;width:1066px;height:2px;background:#e9e9e9"></div>
<div class="a" style="left:18.9px;top:220.1px;width:9.2px;height:9.2px;border-radius:50%;background:#f00;box-shadow:0 0 0 0.8px #6a4040"></div>
<div class="a" style="left:210px;top:215px;width:14px;height:20px;background:#f0f0f0"></div>
<svg style="left:213px;top:223.5px;" width="8" height="4" viewBox="0 0 8 4"><path d="M0 0H7.5L3.75 4Z" fill="#000"/></svg>
<div class="t" style="left:34.2px;top:219.34px;font-size:12px;color:#000;">Konflikt98</div>
<div class="t" style="left:151px;top:219.34px;font-size:12px;color:#000;">Neu</div>
<div class="t" style="left:227.5px;top:219.34px;font-size:12px;color:#000;letter-spacing:-0.702px">7,500_02_OG_RDOK (2)</div>
<div class="t" style="left:395.2px;top:219.34px;font-size:12px;color:#000;letter-spacing:-0.648px">C-1</div>
<div class="t" style="left:549.2px;top:219.34px;font-size:12px;color:#000;letter-spacing:-0.207px">15:55:31 15-04-2019</div>
<div class="t" style="left:859.3px;top:219.34px;font-size:12px;color:#000;">Hart</div>
<div class="t" style="left:1003.5px;width:60px;text-align:right;top:219.34px;font-size:12px;letter-spacing:-0.1px;color:#000">-0,096 m</div>
<div class="a" style="left:0px;top:257px;width:1066px;height:2px;background:#e9e9e9"></div>
<div class="a" style="left:18.9px;top:242.1px;width:9.2px;height:9.2px;border-radius:50%;background:#f00;box-shadow:0 0 0 0.8px #6a4040"></div>
<div class="a" style="left:210px;top:237px;width:14px;height:20px;background:#f0f0f0"></div>
<svg style="left:213px;top:245.5px;" width="8" height="4" viewBox="0 0 8 4"><path d="M0 0H7.5L3.75 4Z" fill="#000"/></svg>
<div class="t" style="left:34.2px;top:241.34px;font-size:12px;color:#000;">Konflikt99</div>
<div class="t" style="left:151px;top:241.34px;font-size:12px;color:#000;">Neu</div>
<div class="t" style="left:227.5px;top:241.34px;font-size:12px;color:#000;letter-spacing:-0.361px">Testebene (2)</div>
<div class="t" style="left:395.2px;top:241.34px;font-size:12px;color:#000;letter-spacing:-0.192px">B-4(-1)</div>
<div class="t" style="left:549.2px;top:241.34px;font-size:12px;color:#000;letter-spacing:-0.207px">15:55:31 15-04-2019</div>
<div class="t" style="left:859.3px;top:241.34px;font-size:12px;color:#000;">Hart</div>
<div class="t" style="left:1003.5px;width:60px;text-align:right;top:241.34px;font-size:12px;letter-spacing:-0.1px;color:#000">-0,096 m</div>
<div class="a" style="left:0px;top:279px;width:1066px;height:2px;background:#e9e9e9"></div>
<div class="a" style="left:18.9px;top:264.1px;width:9.2px;height:9.2px;border-radius:50%;background:#f00;box-shadow:0 0 0 0.8px #6a4040"></div>
<div class="a" style="left:210px;top:259px;width:14px;height:20px;background:#f0f0f0"></div>
<svg style="left:213px;top:267.5px;" width="8" height="4" viewBox="0 0 8 4"><path d="M0 0H7.5L3.75 4Z" fill="#000"/></svg>
<div class="t" style="left:34.2px;top:263.34px;font-size:12px;color:#000;">Konflikt100</div>
<div class="t" style="left:151px;top:263.34px;font-size:12px;color:#000;">Neu</div>
<div class="t" style="left:227.5px;top:263.34px;font-size:12px;color:#000;letter-spacing:-0.361px">Testebene (2)</div>
<div class="t" style="left:395.2px;top:263.34px;font-size:12px;color:#000;letter-spacing:-0.224px">B-4(1)</div>
<div class="t" style="left:549.2px;top:263.34px;font-size:12px;color:#000;letter-spacing:-0.207px">15:55:31 15-04-2019</div>
<div class="t" style="left:859.3px;top:263.34px;font-size:12px;color:#000;">Hart</div>
<div class="t" style="left:1003.5px;width:60px;text-align:right;top:263.34px;font-size:12px;letter-spacing:-0.1px;color:#000">-0,096 m</div>
<svg style="left:112px;top:261px;" width="17" height="14" viewBox="0 0 17 14"><path d="M1 4.5H4.5L6 1.5H11L12.5 4.5H15.5V13H1Z" fill="#eceef0" stroke="#666" stroke-width="1.1" stroke-linejoin="round"/><circle cx="8.5" cy="8.5" r="3.2" fill="#fff" stroke="#666" stroke-width="1.1"/></svg>
<div class="a" style="left:0px;top:301px;width:1066px;height:2px;background:#e9e9e9"></div>
<div class="a" style="left:18.9px;top:286.1px;width:9.2px;height:9.2px;border-radius:50%;background:#f00;box-shadow:0 0 0 0.8px #6a4040"></div>
<div class="a" style="left:210px;top:281px;width:14px;height:20px;background:#f0f0f0"></div>
<svg style="left:213px;top:289.5px;" width="8" height="4" viewBox="0 0 8 4"><path d="M0 0H7.5L3.75 4Z" fill="#000"/></svg>
<div class="t" style="left:34.2px;top:285.34px;font-size:12px;color:#000;">Konflikt101</div>
<div class="t" style="left:151px;top:285.34px;font-size:12px;color:#000;">Neu</div>
<div class="t" style="left:227.5px;top:285.34px;font-size:12px;color:#000;letter-spacing:-0.702px">7,500_02_OG_RDOK (2)</div>
<div class="t" style="left:395.2px;top:285.34px;font-size:12px;color:#000;letter-spacing:-0.357px">C-2(-2)</div>
<div class="t" style="left:549.2px;top:285.34px;font-size:12px;color:#000;letter-spacing:-0.207px">15:55:31 15-04-2019</div>
<div class="t" style="left:859.3px;top:285.34px;font-size:12px;color:#000;">Hart</div>
<div class="t" style="left:1003.5px;width:60px;text-align:right;top:285.34px;font-size:12px;letter-spacing:-0.1px;color:#000">-0,093 m</div>
<div class="a" style="left:0px;top:323px;width:1066px;height:2px;background:#e9e9e9"></div>
<div class="a" style="left:18.9px;top:308.1px;width:9.2px;height:9.2px;border-radius:50%;background:#f00;box-shadow:0 0 0 0.8px #6a4040"></div>
<div class="a" style="left:210px;top:303px;width:14px;height:20px;background:#f0f0f0"></div>
<svg style="left:213px;top:311.5px;" width="8" height="4" viewBox="0 0 8 4"><path d="M0 0H7.5L3.75 4Z" fill="#000"/></svg>
<div class="t" style="left:34.2px;top:307.34px;font-size:12px;color:#000;">Konflikt102</div>
<div class="t" style="left:151px;top:307.34px;font-size:12px;color:#000;">Neu</div>
<div class="t" style="left:227.5px;top:307.34px;font-size:12px;color:#000;letter-spacing:-0.702px">7,500_02_OG_RDOK (2)</div>
<div class="t" style="left:395.2px;top:307.34px;font-size:12px;color:#000;letter-spacing:-0.648px">C-1</div>
<div class="t" style="left:549.2px;top:307.34px;font-size:12px;color:#000;letter-spacing:-0.207px">15:55:31 15-04-2019</div>
<div class="t" style="left:859.3px;top:307.34px;font-size:12px;color:#000;">Hart</div>
<div class="t" style="left:1003.5px;width:60px;text-align:right;top:307.34px;font-size:12px;letter-spacing:-0.1px;color:#000">-0,093 m</div>
<div class="a" style="left:0px;top:345px;width:1066px;height:2px;background:#e9e9e9"></div>
<div class="a" style="left:18.9px;top:330.1px;width:9.2px;height:9.2px;border-radius:50%;background:#f00;box-shadow:0 0 0 0.8px #6a4040"></div>
<div class="a" style="left:210px;top:325px;width:14px;height:20px;background:#f0f0f0"></div>
<svg style="left:213px;top:333.5px;" width="8" height="4" viewBox="0 0 8 4"><path d="M0 0H7.5L3.75 4Z" fill="#000"/></svg>
<div class="t" style="left:34.2px;top:329.34px;font-size:12px;color:#000;">Konflikt103</div>
<div class="t" style="left:151px;top:329.34px;font-size:12px;color:#000;">Neu</div>
<div class="t" style="left:227.5px;top:329.34px;font-size:12px;color:#000;letter-spacing:-0.771px">0,000_00_EG_FBOK (1)</div>
<div class="t" style="left:395.2px;top:329.34px;font-size:12px;color:#000;letter-spacing:-0.448px">D-2</div>
<div class="t" style="left:549.2px;top:329.34px;font-size:12px;color:#000;letter-spacing:-0.207px">15:55:31 15-04-2019</div>
<div class="t" style="left:859.3px;top:329.34px;font-size:12px;color:#000;">Hart</div>
<div class="t" style="left:1003.5px;width:60px;text-align:right;top:329.34px;font-size:12px;letter-spacing:-0.1px;color:#000">-0,093 m</div>
</div>
<div class="a" style="left:1218px;top:352px;width:22px;height:363px;background:linear-gradient(90deg,#dfdfdf,#efefef);border:1px solid #555;border-right:none"></div>
<svg style="left:1226px;top:358px;" width="7" height="10" viewBox="0 0 7 10"><path d="M5.8 1L1.8 5L5.8 9" fill="none" stroke="#a0a0a0" stroke-width="2.8"/></svg>
<div class="t" style="left:1234.3px;top:375px;font-size:11px;transform-origin:0 0;transform:rotate(90deg);letter-spacing:0.35px">Anzeigeeinstellungen</div>
<div class="a" style="left:4px;top:720px;width:1236px;height:255px;background:#e4e4e4"></div>
<div class="a" style="left:4px;top:719px;width:1236px;height:1px;background:#f2f2f2"></div>
<div class="a" style="left:14px;top:725px;width:1216px;height:23px;background:linear-gradient(#dedede,#f1f1f1);border:1px solid #7a7a7a;border-bottom-color:#3a3a3a;box-shadow:inset 0 1px 0 #fff,inset 0 -1px 0 #fafafa"></div>
<svg style="left:20px;top:733px;" width="11" height="8" viewBox="0 0 11 8"><path d="M1.6 1.4L5.5 5.4L9.4 1.4" fill="none" stroke="#a2a2a2" stroke-width="2.6"/></svg>
<div class="t" style="left:42px;top:732.49px;font-size:11px;letter-spacing:0.014px">Elemente</div>
<div class="t" style="left:16.5px;top:762.69px;font-size:11px;letter-spacing:-0.103px">Element 1</div>
<div class="a" style="left:184px;top:763px;width:10px;height:10px;background:#f28b8b;border-radius:2px"></div>
<div class="a" style="left:325px;top:762px;width:14px;height:14px;background:#fff;border:1px solid #6c6c6c"></div>
<svg style="left:325px;top:762px;" width="14" height="14" viewBox="0 0 14 14"><path d="M2.6 7.2L5.8 10.4L10.6 3.2" fill="none" stroke="#151515" stroke-width="2.1" stroke-linejoin="bevel"/></svg>
<div class="t" style="left:344px;top:761.14px;font-size:12px;letter-spacing:-0.261px">Hervorheben</div>
<div class="a" style="left:536px;top:755px;width:82px;height:26px;background:linear-gradient(#f4f4f4 0%,#ececec 45%,#e1e1e1 100%);border:1px solid #5e5e5e;border-radius:3px;box-shadow:inset 0 1px 0 #fff"></div>
<div class="a" style="left:563px;top:756px;width:1px;height:24px;background:#5e5e5e"></div>
<div class="a" style="left:590px;top:756px;width:1px;height:24px;background:#5e5e5e"></div>
<svg style="left:543px;top:761px;" width="15" height="13" viewBox="0 0 15 13"><path d="M2.6 0.6H0.7V12.4H2.6M12.4 0.6H14.3V12.4H12.4" fill="none" stroke="#2f3338" stroke-width="1.2"/><circle cx="7.5" cy="3.4" r="1.8" fill="none" stroke="#2f3338" stroke-width="1.1"/><circle cx="4.5" cy="9" r="1.8" fill="none" stroke="#2f3338" stroke-width="1.1"/><circle cx="10.5" cy="9" r="1.8" fill="none" stroke="#2f3338" stroke-width="1.1"/></svg>
<svg style="left:569px;top:764px;" width="17" height="10" viewBox="0 0 17 10"><path d="M0.5 4.5L4.5 1V8Z" fill="#333"/><path d="M3 4.5H6" stroke="#333" stroke-width="2"/><rect x="6" y="0.8" width="10" height="7.5" rx="1" fill="#e8ebef" stroke="#333" stroke-width="1.3"/></svg>
<svg style="left:599px;top:760px;" width="11" height="17" viewBox="0 0 11 17"><path d="M0.5 0.5V13L3.5 10L6 15.5L8 14.5L5.5 9.5H10Z" fill="#dde3ea" stroke="#333" stroke-width="1" stroke-linejoin="round"/></svg>
<div class="a" style="left:14px;top:783px;width:606px;height:32px;background:#fff;border:1px solid #8a8a8a"></div>
<div class="t" style="left:17.5px;top:787.69px;font-size:11px;letter-spacing:0.090px">Element Name: Rohrtypen</div>
<div class="t" style="left:17.5px;top:800.69px;font-size:11px;letter-spacing:-0.011px">Element Typ: Rohre: Rohrtypen: 500_DIN_EN_10220_Stahlrohr_Stutzen</div>
<div class="a" style="left:14px;top:820px;width:606px;height:151px;background:#fff;border:1px solid #8a8a8a;box-shadow:inset 1px 1px 0 #e4e4e4, inset -2px -2px 0 #e4e4e4"></div>
<div class="a" style="left:25px;top:825px;width:9px;height:9px;background:#0a7ae6;border:1px solid #000;border-radius:2px"></div>
<div class="a" style="left:27px;top:829px;width:5px;height:1px;background:#fff"></div>
<svg style="left:36px;top:823px;" width="13" height="15" viewBox="0 0 13 15"><path d="M0.5 0.5H9L12.5 4V14.5H0.5Z" fill="#fff" stroke="#000080" stroke-width="1"/><path d="M9 0.5V4H12.5" fill="none" stroke="#000080"/><rect x="2.5" y="7.5" width="5" height="4" fill="none" stroke="#000080"/><path d="M4.5 7.5V5.5H9.5V9.5H7.5" fill="none" stroke="#000080"/></svg>
<div class="t" style="left:51.2px;top:823.54px;font-size:12px;font-weight:bold;letter-spacing:0.052px">9997_TGA_2019_04_15.nwc</div>
<div class="a" style="left:29px;top:834px;width:1px;height:11px;background:#a0a0a0"></div>
<div class="a" style="left:29px;top:845px;width:12px;height:1px;background:#a0a0a0"></div>
<div class="a" style="left:41px;top:841px;width:9px;height:9px;background:#0a7ae6;border:1px solid #000;border-radius:2px"></div>
<div class="a" style="left:43px;top:845px;width:5px;height:1px;background:#fff"></div>
<svg style="left:52px;top:840px;" width="13" height="12" viewBox="0 0 13 12"><path d="M3 0.5H12.5L10 3H0.5Z" fill="#d8d8c8" stroke="#000090" stroke-width="1"/><path d="M3 4.5H12.5L10 7H0.5Z" fill="#909020" stroke="#000090" stroke-width="1"/><path d="M3 8.5H12.5L10 11H0.5Z" fill="#c0c0b0" stroke="#000090" stroke-width="1"/></svg>
<div class="t" style="left:67.2px;top:839.54px;font-size:12px;font-weight:bold;letter-spacing:-0.441px">7,000_02_OG_FBOK</div>
<div class="a" style="left:45px;top:850px;width:1px;height:11px;background:#a0a0a0"></div>
<div class="a" style="left:45px;top:861px;width:12px;height:1px;background:#a0a0a0"></div>
<div class="a" style="left:57px;top:857px;width:9px;height:9px;background:#0a7ae6;border:1px solid #000;border-radius:2px"></div>
<div class="a" style="left:59px;top:861px;width:5px;height:1px;background:#fff"></div>
<svg style="left:68px;top:856px;" width="13" height="13" viewBox="0 0 13 13"><circle cx="2" cy="2" r="1.6" fill="#e0e0c8" stroke="#000090" stroke-width="1"/><circle cx="10" cy="2" r="1.6" fill="#e0e0c8" stroke="#000090" stroke-width="1"/><circle cx="6" cy="6.2" r="1.6" fill="#e0e0c8" stroke="#000090" stroke-width="1"/><circle cx="2" cy="10.5" r="1.6" fill="#e0e0c8" stroke="#000090" stroke-width="1"/><circle cx="10" cy="10.5" r="1.6" fill="#e0e0c8" stroke="#000090" stroke-width="1"/></svg>
<div class="t" style="left:83.2px;top:855.54px;font-size:12px;font-weight:bold;letter-spacing:-0.234px">Rohre</div>
<div class="a" style="left:61px;top:866px;width:1px;height:11px;background:#a0a0a0"></div>
<div class="a" style="left:61px;top:877px;width:12px;height:1px;background:#a0a0a0"></div>
<div class="a" style="left:73px;top:873px;width:9px;height:9px;background:#0a7ae6;border:1px solid #000;border-radius:2px"></div>
<div class="a" style="left:75px;top:877px;width:5px;height:1px;background:#fff"></div>
<svg style="left:84px;top:872px;" width="13" height="13" viewBox="0 0 13 13"><circle cx="2" cy="2" r="1.6" fill="#e0e0c8" stroke="#000090" stroke-width="1"/><circle cx="10" cy="2" r="1.6" fill="#e0e0c8" stroke="#000090" stroke-width="1"/><circle cx="6" cy="6.2" r="1.6" fill="#e0e0c8" stroke="#000090" stroke-width="1"/><circle cx="2" cy="10.5" r="1.6" fill="#e0e0c8" stroke="#000090" stroke-width="1"/><circle cx="10" cy="10.5" r="1.6" fill="#e0e0c8" stroke="#000090" stroke-width="1"/></svg>
<div class="t" style="left:99.2px;top:871.54px;font-size:12px;font-weight:bold;letter-spacing:-0.111px">Rohrtypen</div>
<div class="a" style="left:77px;top:882px;width:1px;height:11px;background:#a0a0a0"></div>
<div class="a" style="left:77px;top:893px;width:12px;height:1px;background:#a0a0a0"></div>
<div class="a" style="left:89px;top:889px;width:9px;height:9px;background:#0a7ae6;border:1px solid #000;border-radius:2px"></div>
<div class="a" style="left:91px;top:893px;width:5px;height:1px;background:#fff"></div>
<svg style="left:100px;top:888px;" width="13" height="13" viewBox="0 0 13 13"><circle cx="2" cy="2" r="1.6" fill="#e0e0c8" stroke="#000090" stroke-width="1"/><circle cx="10" cy="2" r="1.6" fill="#e0e0c8" stroke="#000090" stroke-width="1"/><circle cx="6" cy="6.2" r="1.6" fill="#e0e0c8" stroke="#000090" stroke-width="1"/><circle cx="2" cy="10.5" r="1.6" fill="#e0e0c8" stroke="#000090" stroke-width="1"/><circle cx="10" cy="10.5" r="1.6" fill="#e0e0c8" stroke="#000090" stroke-width="1"/></svg>
<div class="t" style="left:115.2px;top:887.54px;font-size:12px;font-weight:bold;letter-spacing:-0.008px">500_DIN_EN_10220_Stahlrohr_Stutzen</div>
<div class="a" style="left:93px;top:898px;width:1px;height:11px;background:#a0a0a0"></div>
<div class="a" style="left:93px;top:909px;width:12px;height:1px;background:#a0a0a0"></div>
<div class="a" style="left:105px;top:905px;width:9px;height:9px;background:#0a7ae6;border:1px solid #000;border-radius:2px"></div>
<div class="a" style="left:107px;top:909px;width:5px;height:1px;background:#fff"></div>
<div class="a" style="left:109px;top:907px;width:1px;height:5px;background:#fff"></div>
<svg style="left:116px;top:906px;" width="13" height="11" viewBox="0 0 13 11"><path d="M0.5 3.5H9.5V10.5H0.5Z" fill="#fff" stroke="#000090"/><path d="M0.5 3.5L3 0.5H12L9.5 3.5M12 0.5V7.5L9.5 10.5" fill="#d8d8d8" stroke="#000090"/><path d="M0.5 7H9.5M5 3.5V10.5" stroke="#000090"/></svg>
<div class="a" style="left:131.0px;top:903px;width:61px;height:14px;background:#0078d7;border:1px dashed #000"></div>
<div class="t" style="left:133.2px;top:903.54px;font-size:12px;font-weight:bold;color:#fff;letter-spacing:-0.556px">Rohrtypen</div>
<div class="t" style="left:626.5px;top:762.69px;font-size:11px;letter-spacing:-0.103px">Element 2</div>
<div class="a" style="left:794px;top:763px;width:10px;height:10px;background:#8ee88e;border-radius:2px"></div>
<div class="a" style="left:935px;top:762px;width:14px;height:14px;background:#fff;border:1px solid #6c6c6c"></div>
<svg style="left:935px;top:762px;" width="14" height="14" viewBox="0 0 14 14"><path d="M2.6 7.2L5.8 10.4L10.6 3.2" fill="none" stroke="#151515" stroke-width="2.1" stroke-linejoin="bevel"/></svg>
<div class="t" style="left:954px;top:761.14px;font-size:12px;letter-spacing:-0.261px">Hervorheben</div>
<div class="a" style="left:1146px;top:755px;width:82px;height:26px;background:linear-gradient(#f4f4f4 0%,#ececec 45%,#e1e1e1 100%);border:1px solid #5e5e5e;border-radius:3px;box-shadow:inset 0 1px 0 #fff"></div>
<div class="a" style="left:1173px;top:756px;width:1px;height:24px;background:#5e5e5e"></div>
<div class="a" style="left:1200px;top:756px;width:1px;height:24px;background:#5e5e5e"></div>
<svg style="left:1153px;top:761px;" width="15" height="13" viewBox="0 0 15 13"><path d="M2.6 0.6H0.7V12.4H2.6M12.4 0.6H14.3V12.4H12.4" fill="none" stroke="#2f3338" stroke-width="1.2"/><circle cx="7.5" cy="3.4" r="1.8" fill="none" stroke="#2f3338" stroke-width="1.1"/><circle cx="4.5" cy="9" r="1.8" fill="none" stroke="#2f3338" stroke-width="1.1"/><circle cx="10.5" cy="9" r="1.8" fill="none" stroke="#2f3338" stroke-width="1.1"/></svg>
<svg style="left:1179px;top:764px;" width="17" height="10" viewBox="0 0 17 10"><path d="M0.5 4.5L4.5 1V8Z" fill="#333"/><path d="M3 4.5H6" stroke="#333" stroke-width="2"/><rect x="6" y="0.8" width="10" height="7.5" rx="1" fill="#e8ebef" stroke="#333" stroke-width="1.3"/></svg>
<svg style="left:1209px;top:760px;" width="11" height="17" viewBox="0 0 11 17"><path d="M0.5 0.5V13L3.5 10L6 15.5L8 14.5L5.5 9.5H10Z" fill="#dde3ea" stroke="#333" stroke-width="1" stroke-linejoin="round"/></svg>
<div class="a" style="left:624px;top:783px;width:606px;height:32px;background:#fff;border:1px solid #8a8a8a"></div>
<div class="t" style="left:627.5px;top:787.69px;font-size:11px;letter-spacing:-0.115px">Element Name: EDV 2OG.003</div>
<div class="t" style="left:627.5px;top:800.69px;font-size:11px;letter-spacing:-0.112px">Element Typ: Räume</div>
<div class="a" style="left:624px;top:820px;width:606px;height:151px;background:#fff;border:1px solid #8a8a8a;box-shadow:inset 1px 1px 0 #e4e4e4, inset -2px -2px 0 #e4e4e4"></div>
<div class="a" style="left:635px;top:825px;width:9px;height:9px;background:#0a7ae6;border:1px solid #000;border-radius:2px"></div>
<div class="a" style="left:637px;top:829px;width:5px;height:1px;background:#fff"></div>
<svg style="left:646px;top:823px;" width="13" height="15" viewBox="0 0 13 15"><path d="M0.5 0.5H9L12.5 4V14.5H0.5Z" fill="#fff" stroke="#000080" stroke-width="1"/><path d="M9 0.5V4H12.5" fill="none" stroke="#000080"/><rect x="2.5" y="7.5" width="5" height="4" fill="none" stroke="#000080"/><path d="M4.5 7.5V5.5H9.5V9.5H7.5" fill="none" stroke="#000080"/></svg>
<div class="t" style="left:661.2px;top:823.54px;font-size:12px;font-weight:bold;letter-spacing:0.024px">9997_BAU_2019_04_15.nwc</div>
<div class="a" style="left:639px;top:834px;width:1px;height:11px;background:#a0a0a0"></div>
<div class="a" style="left:639px;top:845px;width:12px;height:1px;background:#a0a0a0"></div>
<div class="a" style="left:651px;top:841px;width:9px;height:9px;background:#0a7ae6;border:1px solid #000;border-radius:2px"></div>
<div class="a" style="left:653px;top:845px;width:5px;height:1px;background:#fff"></div>
<svg style="left:662px;top:840px;" width="13" height="12" viewBox="0 0 13 12"><path d="M3 0.5H12.5L10 3H0.5Z" fill="#d8d8c8" stroke="#000090" stroke-width="1"/><path d="M3 4.5H12.5L10 7H0.5Z" fill="#909020" stroke="#000090" stroke-width="1"/><path d="M3 8.5H12.5L10 11H0.5Z" fill="#c0c0b0" stroke="#000090" stroke-width="1"/></svg>
<div class="t" style="left:677.2px;top:839.54px;font-size:12px;font-weight:bold;letter-spacing:-0.213px">7,500_02_OG_RDOK</div>
<div class="a" style="left:655px;top:850px;width:1px;height:11px;background:#a0a0a0"></div>
<div class="a" style="left:655px;top:861px;width:12px;height:1px;background:#a0a0a0"></div>
<div class="a" style="left:667px;top:857px;width:9px;height:9px;background:#0a7ae6;border:1px solid #000;border-radius:2px"></div>
<div class="a" style="left:669px;top:861px;width:5px;height:1px;background:#fff"></div>
<svg style="left:678px;top:856px;" width="13" height="13" viewBox="0 0 13 13"><circle cx="2" cy="2" r="1.6" fill="#e0e0c8" stroke="#000090" stroke-width="1"/><circle cx="10" cy="2" r="1.6" fill="#e0e0c8" stroke="#000090" stroke-width="1"/><circle cx="6" cy="6.2" r="1.6" fill="#e0e0c8" stroke="#000090" stroke-width="1"/><circle cx="2" cy="10.5" r="1.6" fill="#e0e0c8" stroke="#000090" stroke-width="1"/><circle cx="10" cy="10.5" r="1.6" fill="#e0e0c8" stroke="#000090" stroke-width="1"/></svg>
<div class="t" style="left:693.2px;top:855.54px;font-size:12px;font-weight:bold;letter-spacing:-0.203px">Räume</div>
<div class="a" style="left:671px;top:866px;width:1px;height:11px;background:#a0a0a0"></div>
<div class="a" style="left:671px;top:877px;width:12px;height:1px;background:#a0a0a0"></div>
<div class="a" style="left:683px;top:873px;width:9px;height:9px;background:#0a7ae6;border:1px solid #000;border-radius:2px"></div>
<div class="a" style="left:685px;top:877px;width:5px;height:1px;background:#fff"></div>
<div class="a" style="left:687px;top:875px;width:1px;height:5px;background:#fff"></div>
<svg style="left:694px;top:874px;" width="13" height="11" viewBox="0 0 13 11"><path d="M0.5 3.5H9.5V10.5H0.5Z" fill="#fff" stroke="#000090"/><path d="M0.5 3.5L3 0.5H12L9.5 3.5M12 0.5V7.5L9.5 10.5" fill="#d8d8d8" stroke="#000090"/><path d="M0.5 7H9.5M5 3.5V10.5" stroke="#000090"/></svg>
<div class="a" style="left:709.0px;top:871px;width:72px;height:14px;background:#0078d7;border:1px dashed #000"></div>
<div class="t" style="left:711.2px;top:871.54px;font-size:12px;font-weight:bold;color:#fff;letter-spacing:-0.974px">EDV 2OG.003</div>
<div class="a" style="left:4px;top:26px;width:1px;height:949px;background:rgba(255,255,255,0.7)"></div>
<div class="a" style="left:1239px;top:26px;width:1px;height:949px;background:rgba(255,255,255,0.7)"></div>
<div class="a" style="left:4px;top:974px;width:1236px;height:1px;background:rgba(255,255,255,0.8)"></div>
</body></html>
